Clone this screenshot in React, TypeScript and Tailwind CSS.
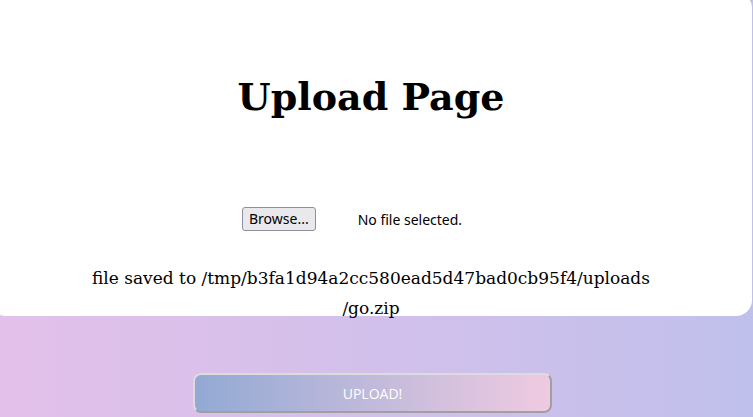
export default function App() {
  return (
    <div className="h-[417px] w-full overflow-hidden bg-gradient-to-r from-[#e3c0ea] to-[#c0c0ec] flex flex-col items-start">
      <div className="-mt-2 -ml-[10px] w-[762px] h-[324px] bg-white rounded-2xl flex flex-col items-center shrink-0">
        <h1 className="mt-[83px] text-[38px] leading-[44px] font-bold text-black [font-family:'DejaVu_Serif',serif]">
          Upload Page
        </h1>
        <div className="mt-[88px] w-[258px] flex items-center gap-[42px] [font-family:'Noto_Sans',sans-serif] text-[14px] text-black">
          <button className="h-6 px-[6px] rounded-[3px] border border-[#8f8f9d] bg-[#e9e9ed] leading-none">
            Browse...
          </button>
          <span>No file selected.</span>
        </div>
        <p className="mt-[32px] text-center text-[17px] leading-[30px] text-black [font-family:'DejaVu_Serif',serif]">
          file saved to /tmp/b3fa1d94a2cc580ead5d47bad0cb95f4/uploads
          <br />
          /go.zip
        </p>
      </div>
      <div className="w-full flex justify-center mt-[57px]">
        <button className="-ml-2 w-[359px] h-[40px] rounded-lg border-2 border-t-[#dcdcdc] border-l-[#dcdcdc] border-r-[#a0a0a0] border-b-[#a0a0a0] bg-gradient-to-r from-[#92a9d4] to-[#efcae1] text-white text-[14px] [font-family:'Open_Sans',sans-serif]">
          UPLOAD!
        </button>
      </div>
    </div>
  );
}
